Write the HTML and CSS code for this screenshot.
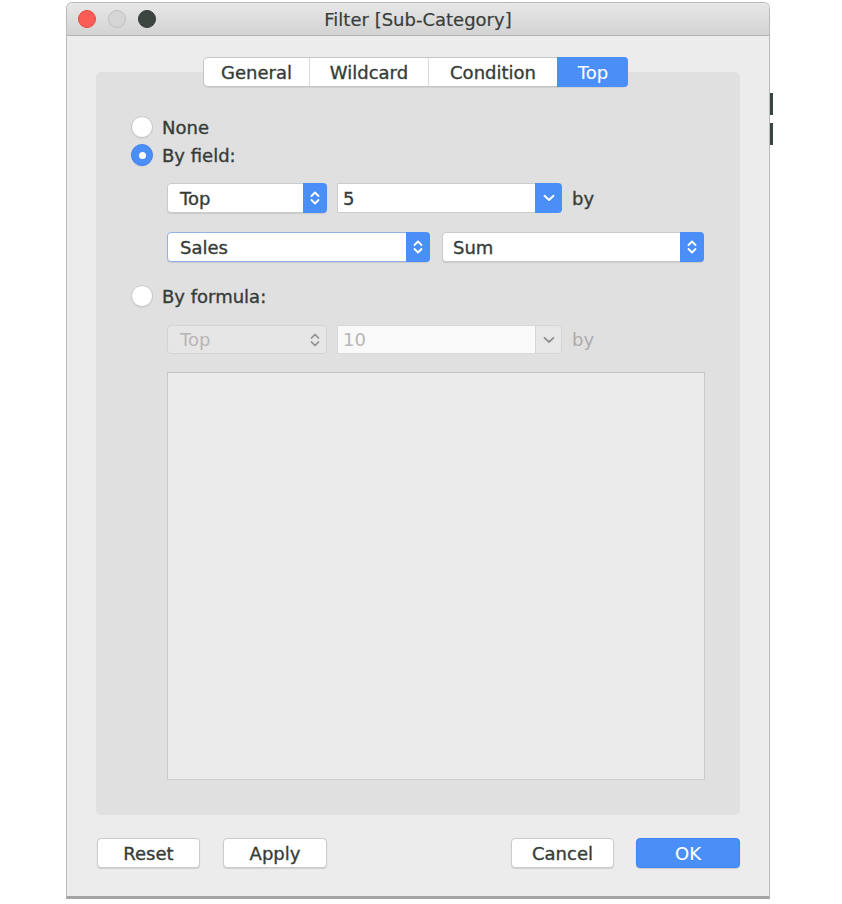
FILE: index.html
```html
<!DOCTYPE html>
<html lang="en">
<head>
    <meta charset="UTF-8">
    <title>Filter [Sub-Category]</title>
    <link rel="stylesheet" href="styles.css">
</head>
<body>
    <div class="page">
        <div class="window">
            <div class="titlebar">
                <div class="lights">
                    <span class="light red"></span>
                    <span class="light grey"></span>
                    <span class="light dark"></span>
                </div>
                <div class="title">Filter [Sub-Category]</div>
            </div>

            <div class="content">
                <div class="panel">
                    <div class="tabs">
                        <div class="tab t-general">General</div>
                        <div class="tab t-wild">Wildcard</div>
                        <div class="tab t-cond">Condition</div>
                        <div class="tab t-top active">Top</div>
                    </div>

                    <div class="radio-row r-none"><span class="radio"></span>None</div>
                    <div class="radio-row r-field"><span class="radio on"></span>By field:</div>

                    <div class="field-row row-1">
                        <div class="select w-top">
                            <span class="label">Top</span>
                            <span class="step">
                                <svg width="10" height="20" viewBox="0 0 10 20"><path d="M1.5 8 L5 4.5 L8.5 8 M1.5 12 L5 15.5 L8.5 12" fill="none" stroke="#fff" stroke-width="1.8" stroke-linecap="round" stroke-linejoin="round"/></svg>
                            </span>
                        </div>
                        <div class="combo">
                            <span class="input">5</span>
                            <span class="drop">
                                <svg width="12" height="8" viewBox="0 0 12 8"><path d="M1.5 1.8 L6 6 L10.5 1.8" fill="none" stroke="#fff" stroke-width="1.9" stroke-linecap="round" stroke-linejoin="round"/></svg>
                            </span>
                        </div>
                        <span class="by">by</span>
                    </div>

                    <div class="field-row row-2">
                        <div class="select w-sales focus">
                            <span class="label">Sales</span>
                            <span class="step">
                                <svg width="10" height="20" viewBox="0 0 10 20"><path d="M1.5 8 L5 4.5 L8.5 8 M1.5 12 L5 15.5 L8.5 12" fill="none" stroke="#fff" stroke-width="1.8" stroke-linecap="round" stroke-linejoin="round"/></svg>
                            </span>
                        </div>
                        <div class="select w-sum">
                            <span class="label">Sum</span>
                            <span class="step">
                                <svg width="10" height="20" viewBox="0 0 10 20"><path d="M1.5 8 L5 4.5 L8.5 8 M1.5 12 L5 15.5 L8.5 12" fill="none" stroke="#fff" stroke-width="1.8" stroke-linecap="round" stroke-linejoin="round"/></svg>
                            </span>
                        </div>
                    </div>

                    <div class="radio-row r-formula"><span class="radio"></span>By formula:</div>

                    <div class="field-row row-3 disabled">
                        <div class="select w-top">
                            <span class="label">Top</span>
                            <span class="step">
                                <svg width="10" height="20" viewBox="0 0 10 20"><path d="M1.5 8 L5 4.5 L8.5 8 M1.5 12 L5 15.5 L8.5 12" fill="none" stroke="#8f8f8f" stroke-width="1.7" stroke-linecap="round" stroke-linejoin="round"/></svg>
                            </span>
                        </div>
                        <div class="combo">
                            <span class="input">10</span>
                            <span class="drop">
                                <svg width="12" height="8" viewBox="0 0 12 8"><path d="M1.5 1.8 L6 6 L10.5 1.8" fill="none" stroke="#8f8f8f" stroke-width="1.8" stroke-linecap="round" stroke-linejoin="round"/></svg>
                            </span>
                        </div>
                        <span class="by">by</span>
                    </div>

                    <div class="formula-box"></div>
                </div>

                <div class="buttons">
                    <button class="btn">Reset</button>
                    <button class="btn b-apply">Apply</button>
                    <span class="spacer"></span>
                    <button class="btn">Cancel</button>
                    <button class="btn b-ok">OK</button>
                </div>
            </div>
        </div>
        <div class="marks">
            <span></span>
            <span></span>
        </div>
    </div>
</body>
</html>
```

FILE: styles.css
```css
body {
    margin: 0;
    background: #fff;
    font-family: "DejaVu Sans", sans-serif;
    font-size: 18px;
    color: #363c38;
    -webkit-text-stroke: 0.35px currentColor;
}
.page {
    display: flex;
    align-items: flex-start;
    padding: 2px 0 0 66px;
}

/* window frame */
.window {
    width: 704px;
    height: 897px;
    box-sizing: border-box;
    border: 1px solid #bababa;
    border-bottom: 3px solid #a4a4a4;
    border-radius: 6px 6px 0 0;
    background: #ececec;
    display: flex;
    flex-direction: column;
}
.titlebar {
    height: 32px;
    flex: none;
    border-bottom: 1px solid #b3b3b3;
    border-radius: 5px 5px 0 0;
    background: linear-gradient(#e7e7e7, #d3d3d3);
    display: grid;
    grid-template-columns: 1fr auto 1fr;
    align-items: center;
}
.lights {
    display: flex;
    gap: 12px;
    padding-left: 11px;
}
.light {
    width: 18px;
    height: 18px;
    box-sizing: border-box;
    border-radius: 50%;
}
.red { background: #fc5c56; border: 1px solid #e54a44; }
.grey { background: #d5d5d5; border: 1px solid #bfbfbf; }
.dark { background: #3d4541; border: 1px solid #333a37; }
.title {
    font-size: 18px;
    color: #393d3b;
    -webkit-text-stroke: 0.2px currentColor;
}

.content {
    flex: 1;
    display: flex;
    flex-direction: column;
    padding: 36px 29px 0 29px;
}

/* grey inner panel */
.panel {
    height: 743px;
    box-sizing: border-box;
    background: #e0e0e0;
    border-radius: 5px;
    padding-left: 35px;
    display: flex;
    flex-direction: column;
    align-items: flex-start;
}
.tabs {
    display: flex;
    height: 30px;
    margin: -15px 0 0 72px;
    box-sizing: border-box;
    border: 1px solid #c6c6c6;
    border-radius: 5px;
    background: #fff;
    box-shadow: 0 1px 1px rgba(0, 0, 0, 0.08);
}
.tab {
    display: flex;
    align-items: center;
    justify-content: center;
    border-left: 1px solid #dadada;
}
.tab:first-child { border-left: none; }
.t-general { width: 105px; }
.t-wild { width: 118px; }
.t-cond { width: 128px; }
.t-top { width: 70px; }
.tab.active {
    background: #4a8ef8;
    color: #fff;
    -webkit-text-stroke: 0.1px currentColor;
    border-left-color: #4a8ef8;
    border-radius: 0 4px 4px 0;
    margin: -1px -1px -1px 0;
}

/* radio rows */
.radio-row {
    display: flex;
    align-items: center;
    gap: 9px;
    height: 22px;
}
.r-none { margin-top: 29px; }
.r-field { margin-top: 6px; }
.r-formula { margin-top: 23px; }
.radio {
    width: 22px;
    height: 22px;
    box-sizing: border-box;
    border-radius: 50%;
    background: #fff;
    border: 1px solid #c9c9c9;
    box-shadow: 0 1px 1px rgba(0, 0, 0, 0.06);
    display: flex;
    align-items: center;
    justify-content: center;
}
.radio.on {
    background: #4a8ef8;
    border-color: #3f82ec;
}
.radio.on::after {
    content: "";
    width: 7px;
    height: 7px;
    border-radius: 50%;
    background: #fff;
}

/* dropdown rows */
.field-row {
    display: flex;
    align-items: center;
    margin-left: 36px;
    height: 30px;
}
.row-1 { margin-top: 17px; }
.row-2 { margin-top: 19px; }
.row-3 { margin-top: 18px; height: 29px; }

.select {
    display: flex;
    height: 100%;
    box-sizing: border-box;
    background: #fff;
    border: 1px solid #cbcbcb;
    border-radius: 4px;
    box-shadow: 0 1px 1px rgba(0, 0, 0, 0.1);
}
.select .label {
    flex: 1;
    display: flex;
    align-items: center;
    padding-left: 12px;
}
.select .step {
    width: 24px;
    margin: -1px -1px -1px 0;
    background: #4a8ef8;
    border-radius: 0 4px 4px 0;
    display: flex;
    align-items: center;
    justify-content: center;
}
.select.focus { border-color: #8fb2e8; }
.w-top { width: 160px; }
.w-sales { width: 263px; }
.w-sum { width: 262px; margin-left: 12px; }
.w-sum .label { padding-left: 10px; }

.combo {
    display: flex;
    width: 225px;
    height: 100%;
    margin-left: 10px;
}
.combo .input {
    flex: 1;
    display: flex;
    align-items: center;
    padding-left: 5px;
    background: #fff;
    border: 1px solid #cdcdcd;
    border-right: none;
    box-sizing: border-box;
}
.combo .drop {
    width: 27px;
    background: #4a8ef8;
    border-radius: 0 4px 4px 0;
    display: flex;
    align-items: center;
    justify-content: center;
}
.by {
    margin-left: 10px;
}

.disabled .select {
    background: #e6e6e6;
    border-color: #d4d4d4;
    box-shadow: none;
    color: #b6b6b6;
}
.disabled .select .step { background: transparent; }
.disabled .combo .input {
    background: #f9f9f9;
    border-color: #d8d8d8;
    color: #b6b6b6;
}
.disabled .combo .drop {
    background: #e7e7e7;
    border: 1px solid #d6d6d6;
    box-sizing: border-box;
}
.disabled .by { color: #acacac; }
.disabled { -webkit-text-stroke: 0; }

.formula-box {
    width: 538px;
    height: 408px;
    margin: 18px 0 0 36px;
    box-sizing: border-box;
    background: #ebebeb;
    border: 1px solid #cacaca;
    border-top-color: #c2c2c2;
}

/* bottom buttons */
.buttons {
    display: flex;
    margin: 23px 0 0 1px;
    height: 30px;
}
.btn {
    width: 103px;
    height: 30px;
    font-family: "DejaVu Sans", sans-serif;
    font-size: 18px;
    color: #363c38;
    -webkit-text-stroke: 0.35px currentColor;
    background: #fff;
    border: 1px solid #cbcbcb;
    border-radius: 4px;
    box-shadow: 0 1px 1px rgba(0, 0, 0, 0.12);
    padding: 0;
}
.b-apply { width: 104px; margin-left: 23px; }
.spacer { flex: 1; }
.b-ok {
    width: 104px;
    margin-left: 22px;
    background: #4a8ef8;
    border-color: #3f84ef;
    color: #fff;
    -webkit-text-stroke: 0.1px currentColor;
}

.marks {
    display: flex;
    flex-direction: column;
    gap: 8px;
    margin-top: 91px;
}
.marks span {
    width: 3px;
    height: 22px;
    background: #3c4641;
}
```
